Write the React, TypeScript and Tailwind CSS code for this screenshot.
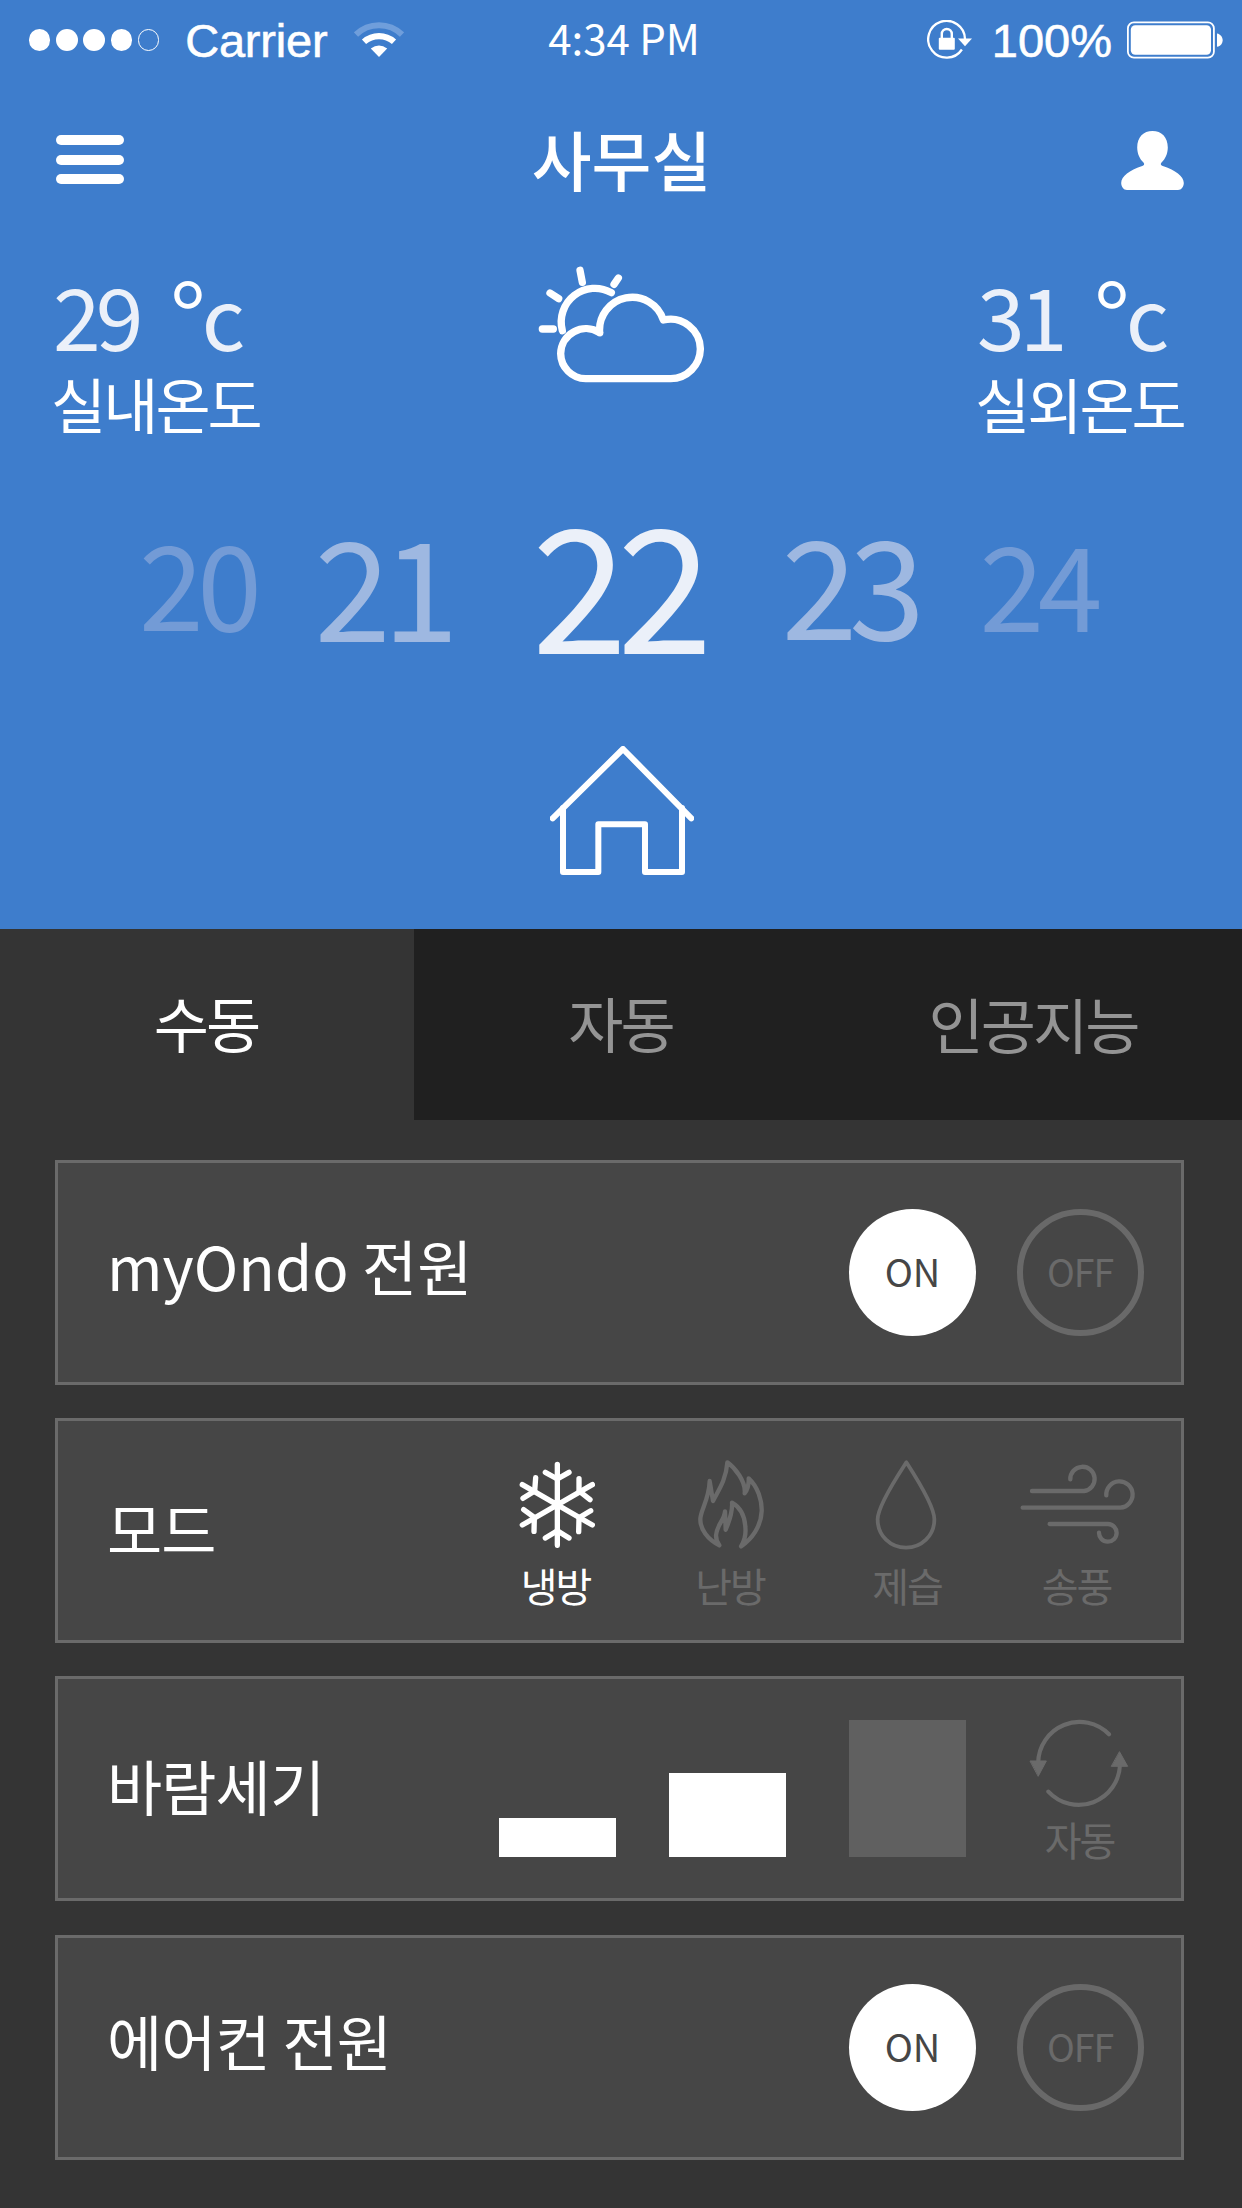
import type { ReactNode } from "react";

function WifiIcon() {
  return (
    <svg className="h-[36px] w-[50px] shrink-0" viewBox="0 0 50 36" fill="none">
      <path d="M2 13.5A33 33 0 0 1 48 13.5" stroke="#6f9edb" strokeWidth="6" />
      <path d="M10 20.8A22.5 22.5 0 0 1 40 20.8" stroke="#fff" strokeWidth="6.2" />
      <path d="M16.8 27.6Q25 21.4 33.2 27.6L25 36Z" fill="#fff" />
    </svg>
  );
}

function LockIcon() {
  return (
    <svg className="h-[40px] w-[45px] shrink-0" viewBox="0 0 45 40" fill="none">
      <path d="M34.9 29.5A18.4 18.4 0 1 1 38 19" stroke="#fff" strokeWidth="2.3" />
      <path d="M31 18.4H45L38 26.2Z" fill="#fff" />
      <path d="M14.8 18.5V14a5 5 0 0 1 10 0V18.5" stroke="#fff" strokeWidth="2.4" />
      <rect x="11.8" y="17.8" width="16" height="12" rx="1" fill="#fff" />
    </svg>
  );
}

function BatteryIcon() {
  return (
    <svg className="h-[38px] w-[96px] shrink-0" viewBox="0 0 96 38" fill="none">
      <rect x="0.9" y="1.3" width="86" height="35.4" rx="6" stroke="#fff" strokeWidth="1.8" />
      <rect x="3.8" y="4.2" width="80.2" height="29.6" rx="4.5" fill="#fff" />
      <path d="M90 12.6C97.5 14 97.5 24.5 90 25.8Z" fill="#fff" />
    </svg>
  );
}

function UserIcon() {
  return (
    <svg className="h-[59px] w-[63px]" viewBox="0 0 63 59" fill="#fff">
      <path d="M31.5 0C40.5 0 46.8 6 46.8 16.5C46.8 23 44 28 41 31C38.8 33.2 40 34.5 42.5 35.3C54 39 62.8 45.5 62.8 52C62.8 55.5 60.5 59 57 59H6C2.5 59 .2 55.5 .2 52C.2 45.5 9 39 20.5 35.3C23 34.5 24.2 33.2 22 31C19 28 16.2 23 16.2 16.5C16.2 6 22.5 0 31.5 0Z" />
    </svg>
  );
}

function WeatherIcon() {
  return (
    <svg className="h-[117px] w-[166.7px]" viewBox="115 78 500 351" fill="none" stroke="#fff" strokeWidth="22" strokeLinecap="round" strokeLinejoin="round">
      <path d="M128 267H161M151 159L177 176M241 91L248 127M356 114L343 133" />
      <path d="M188 272A101 101 0 0 1 335 158" />
      <path d="M300 278A76 76 0 0 0 183 341A76 76 0 0 0 258 416H513A90 90 0 0 0 602 327A90 90 0 0 0 491 240A98 98 0 0 0 300 278" />
    </svg>
  );
}

function HouseIcon() {
  return (
    <svg className="h-[129px] w-[144px]" viewBox="90 78 432 387" fill="none" stroke="#fff" strokeWidth="18" strokeLinecap="round" strokeLinejoin="round">
      <path d="M98 295L309 87L514 295" />
      <path d="M129 264V456H235V313H375V456H486V264" />
    </svg>
  );
}

function SnowIcon() {
  return (
    <svg className="h-[87.7px] w-[76.7px]" viewBox="118 153 230 263" fill="none" stroke="currentColor" strokeWidth="16" strokeLinecap="round" strokeLinejoin="round">
      <path d="M233 163V406M128 224L338 345M338 224L128 345" />
      <path d="M197 187L233 207L268 187M197 384L233 362L268 384" />
      <path d="M298 206V243L331 269M168 203L165 243L130 265M132 299L164 322L163 364M333 302L298 323L297 365" />
    </svg>
  );
}

function FlameIcon() {
  return (
    <svg className="h-[88.7px] w-[66.7px]" viewBox="655 149 200 266" fill="none" stroke="currentColor" strokeWidth="13" strokeLinecap="round" strokeLinejoin="round">
      <path d="M719 405C684 387 661 357 662 325C664 296 688 268 690 212L700 272C714 243 739 212 743 156C765 172 799 212 795 249C803 238 808 225 807 204C835 230 847 270 846 302C844 350 815 387 784 408C797 388 799 370 797 350C795 315 780 290 757 277C759 305 748 335 738 358L736 303C734 330 712 342 709 375C709 390 714 398 719 405" />
    </svg>
  );
}

function DropIcon() {
  return (
    <svg className="h-[90px] w-[62px]" viewBox="73 149 188 271" fill="none" stroke="currentColor" strokeWidth="11.5" strokeLinecap="round" strokeLinejoin="round">
      <path d="M168 155C148 186 81 286 81 328C81 378 120 414 167 414C214 414 253 378 253 328C253 286 188 186 168 155Z" />
    </svg>
  );
}

function WindIcon() {
  return (
    <svg className="h-[80.7px] w-[115.3px]" viewBox="511 160 346 242" fill="none" stroke="currentColor" strokeWidth="13" strokeLinecap="round">
      <path d="M547 241H703A36.5 36.5 0 1 0 662 206" />
      <path d="M519 291H812A39.5 39.5 0 1 0 770 254" />
      <path d="M600 340H775A26.5 26.5 0 1 1 748 366" />
    </svg>
  );
}

function CycleIcon() {
  return (
    <svg className="h-[89.3px] w-[100px]" viewBox="86 58 300 268" fill="none" stroke="currentColor" strokeWidth="12.5" strokeLinecap="round">
      <path d="M326 104A124 124 0 0 0 113.5 190" />
      <path d="M144 276A124 124 0 0 0 359 194" />
      <path d="M90 184H138L114 229ZM334 200H382L358 157Z" fill="currentColor" strokeWidth="3" strokeLinejoin="round" />
    </svg>
  );
}

function Reading({ value, label }: { value: string; label: string }) {
  return (
    <div className="w-[216px] pt-[5px] whitespace-nowrap">
      <div className="flex h-[85px] items-start pl-[2px] text-[86px] leading-[85px] text-[#ebf0f9]">
        <span className="tracking-[-0.057em]">{value}</span>
        <span className="ml-[31px] w-[32px] text-[100px] leading-[86px] font-[350] text-white">°</span>
        <span className="text-[85px]">c</span>
      </div>
      <div className="mt-[17px] text-[60px] leading-[60px] tracking-[-0.05em]">{label}</div>
    </div>
  );
}

function Card({ label, labelClass, className = "", children }: { label: string; labelClass: string; className?: string; children: ReactNode }) {
  return (
    <section className={`flex h-[225px] justify-between border-[3px] border-[#6a6a6a] bg-[#464646] pl-[49px] ${className}`}>
      <h2 className={`flex items-center text-[60px] leading-[60px] whitespace-nowrap text-white ${labelClass}`}>{label}</h2>
      {children}
    </section>
  );
}

function PowerToggle() {
  return (
    <div className="flex items-center gap-[41px] pr-[37px]">
      <button className="flex size-[127px] items-center justify-center rounded-full bg-white pb-[4px] text-[38px] leading-none text-[#464646]">ON</button>
      <button className="flex size-[127px] items-center justify-center rounded-full border-[6px] border-[#696969] pr-px pb-[4px] text-[37.5px] leading-none tracking-[-1px] text-[#6a6a6a]">OFF</button>
    </div>
  );
}

function Mode({ icon, label, className, labelClass }: { icon: ReactNode; label: string; className: string; labelClass: string }) {
  return (
    <div className={`flex w-[114px] flex-col items-center ${className}`}>
      <div className="flex h-[90px] items-center">{icon}</div>
      <div className={`mt-[15px] text-[40px] leading-[40px] tracking-[-0.05em] whitespace-nowrap ${labelClass}`}>{label}</div>
    </div>
  );
}

export default function App() {
  return (
    <div className="flex h-[2208px] w-[1242px] flex-col overflow-hidden bg-[#343434] font-['Noto_Sans_CJK_KR','Noto_Sans_CJK_SC',sans-serif] text-white">
      <header className="flex h-[929px] flex-col bg-[#3e7dcc]">
        <div className="grid h-[79px] grid-cols-[1fr_auto_1fr] items-center whitespace-nowrap">
          <div className="flex items-center pl-[29px]">
            <div className="flex gap-[5.8px]">
              {[0, 1, 2, 3].map((i) => (
                <span key={i} className="h-[22px] w-[21.4px] rounded-full bg-white" />
              ))}
              <span className="h-[22px] w-[21.4px] rounded-full border border-white" />
            </div>
            <span className="mt-px ml-[26px] font-['Liberation_Sans',sans-serif] text-[47px] leading-none tracking-[-0.2px] [-webkit-text-stroke:0.6px_white]">Carrier</span>
            <span className="-mt-px ml-[27px]"><WifiIcon /></span>
          </div>
          <span className="pb-[5px] pl-[6px] text-[42px] leading-none">4:34 PM</span>
          <div className="flex items-center justify-end pr-[19px]">
            <LockIcon />
            <span className="mt-px mr-[15px] ml-[20px] font-['Liberation_Sans',sans-serif] text-[47px] leading-none [-webkit-text-stroke:0.6px_white]">100%</span>
            <BatteryIcon />
          </div>
        </div>

        <div className="mt-[31px] grid h-[100px] grid-cols-[1fr_auto_1fr] items-center pr-[58px] pl-[56px]">
          <button className="mb-px flex w-[68px] flex-col gap-[9.5px]">
            <span className="h-[10px] rounded-full bg-white" />
            <span className="h-[10px] rounded-full bg-white" />
            <span className="h-[10px] rounded-full bg-white" />
          </button>
          <h1 className="pb-[3px] pl-[3px] text-[65px] leading-none font-medium">사무실</h1>
          <div className="flex justify-end"><UserIcon /></div>
        </div>

        <div className="mt-[56px] flex h-[165px] items-start justify-between px-[51px]">
          <Reading value="29" label="실내온도" />
          <WeatherIcon />
          <Reading value="31" label="실외온도" />
        </div>

        <div className="mt-[63px] flex h-[170px] items-start pl-[139px] whitespace-nowrap">
          <span className="pt-[2px] text-[116.5px] leading-[170px] tracking-[-0.055em] text-[#739bd6]">20</span>
          <span className="ml-[59px] pt-[3px] text-[137.5px] leading-[170px] tracking-[-0.06em] text-[#9eb8e1]">21</span>
          <span className="ml-[81px] text-[172.5px] leading-[170px] tracking-[-0.06em] text-[#ebf0f9]">22</span>
          <span className="ml-[79px] pt-px text-[137px] leading-[170px] tracking-[-0.062em] text-[#9eb8e1]">23</span>
          <span className="ml-[63px] pt-[3px] text-[116.5px] leading-[170px] tracking-[-0.055em] text-[#739bd6]">24</span>
        </div>

        <div className="mt-[82px] flex justify-center pl-[2px]"><HouseIcon /></div>
      </header>

      <nav className="grid h-[191px] shrink-0 grid-cols-3 text-[60px] leading-[60px] tracking-[-0.05em] text-[#949494]">
        <button className="flex items-center justify-center pr-[2px] pb-[6px] text-white">수동</button>
        <button className="flex items-center justify-center bg-[#202020] pr-px pb-[5px]">자동</button>
        <button className="flex items-center justify-center bg-[#202020] pr-[4px] pb-[4px]">인공지능</button>
      </nav>

      <main className="flex flex-col gap-[33px] pt-[40px] pr-[58px] pl-[55px]">
        <Card label="myOndo 전원" labelClass="pb-[15px]">
          <PowerToggle />
        </Card>

        <Card label="모드" labelClass="pb-[5px] tracking-[-0.015em]">
          <div className="flex pt-[38.5px] pr-[46px] text-[#6a6a6a]">
            <Mode icon={<SnowIcon />} label="냉방" className="text-white" labelClass="pr-[3px]" />
            <Mode icon={<FlameIcon />} label="난방" className="ml-[60px]" labelClass="pr-[2px]" />
            <Mode icon={<DropIcon />} label="제습" className="ml-[61px]" labelClass="pl-[2px]" />
            <Mode icon={<WindIcon />} label="송풍" className="ml-[58px]" labelClass="pr-[3px]" />
          </div>
        </Card>

        <Card label="바람세기" labelClass="pb-[8px] tracking-[-0.015em]">
          <div className="flex items-start pr-[52px]">
            <div className="flex h-[178px] items-end">
              <span className="h-[39px] w-[117px] bg-white" />
              <span className="ml-[53px] h-[84px] w-[117px] bg-white" />
              <span className="ml-[63px] h-[137px] w-[117px] bg-[#606060]" />
            </div>
            <div className="ml-[63px] flex w-[100px] flex-col items-center pt-[40px] text-[#6a6a6a]">
              <CycleIcon />
              <div className="mt-[11px] pl-px text-[40px] leading-[40px] tracking-[-0.05em] whitespace-nowrap">자동</div>
            </div>
          </div>
        </Card>

        <Card label="에어컨 전원" labelClass="pb-[16px] tracking-[-0.015em]" className="mt-px">
          <PowerToggle />
        </Card>
      </main>
    </div>
  );
}
